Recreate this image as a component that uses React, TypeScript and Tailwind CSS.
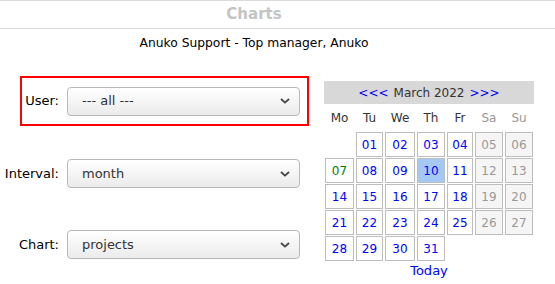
const Chevron = () => (
  <svg width="10" height="6" viewBox="0 0 10 6" className="shrink-0">
    <path d="M1 1l4 3.6L9 1" fill="none" stroke="#444" strokeWidth="1.8" />
  </svg>
);

const SelectBox = ({ value }: { value: string }) => (
  <div className="flex h-[29px] w-[233px] items-center justify-between rounded-[4px] border border-[#b8b8b8] bg-gradient-to-b from-white to-[#ebebeb] pl-[14px] pr-[9px] text-[13px] text-[#333]">
    <span>{value}</span>
    <Chevron />
  </div>
);

const days = Array.from({ length: 31 }, (_, i) => i + 1);
const weekend = [5, 6, 12, 13, 19, 20, 26, 27];

const DayCell = ({ d }: { d: number }) => {
  let cls = "bg-white text-[#0000ff]";
  if (weekend.includes(d)) cls = "bg-[#f5f5f5] text-[#999]";
  if (d === 7) cls = "bg-white text-[#008000]";
  if (d === 10) cls = "bg-[#a6c8f5] text-[#0000ff]";
  return (
    <div className={`flex h-[25px] items-center justify-center border border-[#bdbdbd] ${cls}`}>
      {String(d).padStart(2, "0")}
    </div>
  );
};

const Calendar = () => {
  const names = ["Mo", "Tu", "We", "Th", "Fr", "Sa", "Su"];
  return (
    <div className="w-[210px] text-[12px]">
      <div className="flex h-[23px] items-center justify-center bg-[#d8d8d8] text-[#333]">
        <span className="text-[#0000ff]">&lt;&lt;&lt;</span>
        <span className="mx-[5px]">March 2022</span>
        <span className="text-[#0000ff]">&gt;&gt;&gt;</span>
      </div>
      <div className="grid grid-cols-[29px_27px_30px_28px_26px_28px_28px] gap-x-[2px] gap-y-[1px] pl-px">
        {names.map((n, i) => (
          <div key={n} className={`flex h-[27px] items-center justify-center ${i > 4 ? "text-[#999]" : "text-[#333]"}`}>
            {n}
          </div>
        ))}
        <div />
        {days.map((d) => (
          <DayCell key={d} d={d} />
        ))}
      </div>
      <div className="text-center text-[13px] text-[#0000ff]">Today</div>
    </div>
  );
};

export default function App() {
  return (
    <div className="w-[555px] bg-white text-[13px] text-black" style={{ fontFamily: '"DejaVu Sans", sans-serif' }}>
      <div className="flex h-[29px] items-center justify-center border-y border-[#dcdcdc] pr-[47px] text-[15px] font-bold text-[#c4c4c4]">
        Charts
      </div>
      <div className="h-[47px] pr-[47px] pt-[6px] text-center text-[12.3px] leading-[16px]">
        Anuko Support - Top manager, Anuko
      </div>
      <div className="flex">
        <div className="w-[309px]">
          <div className="ml-5 flex h-[50px] items-center justify-end gap-2 border-2 border-[#ff0000] pr-[7px]">
            <span>User:</span>
            <SelectBox value="--- all ---" />
          </div>
          <div className="mt-[33px] flex items-center justify-end gap-2 pr-[9px]">
            <span>Interval:</span>
            <SelectBox value="month" />
          </div>
          <div className="mt-[42px] flex items-center justify-end gap-2 pr-[9px]">
            <span>Chart:</span>
            <SelectBox value="projects" />
          </div>
        </div>
        <div className="ml-[15px] mt-[5px]">
          <Calendar />
        </div>
      </div>
    </div>
  );
}
